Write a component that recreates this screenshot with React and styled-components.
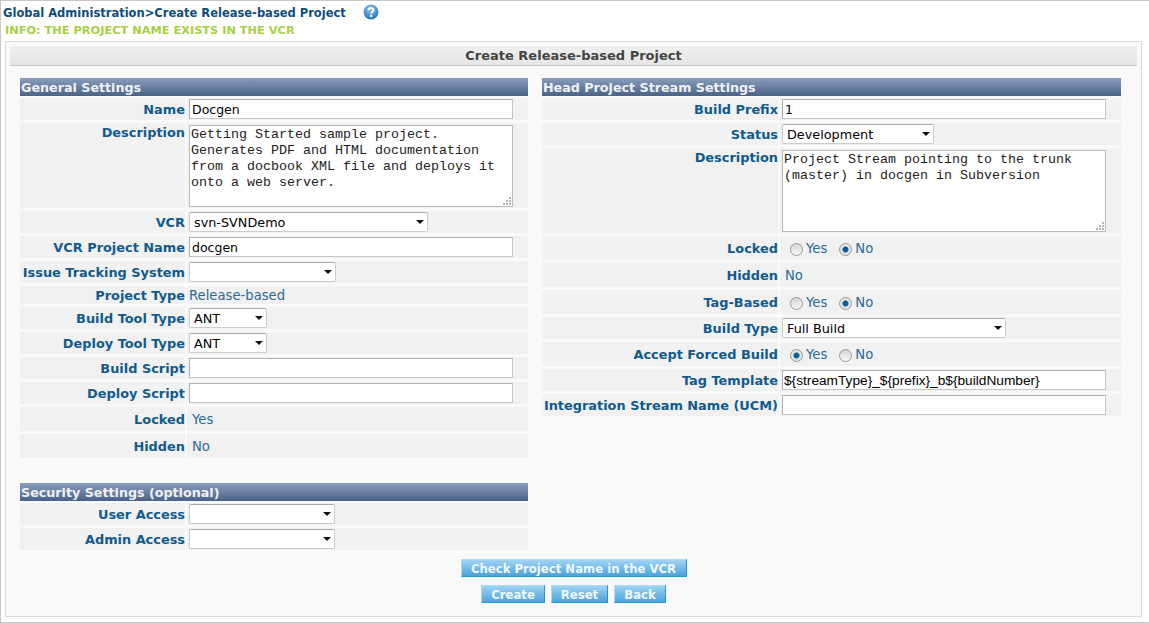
import React from 'react';
import styled, { createGlobalStyle } from 'styled-components';

const Global = createGlobalStyle`
  html, body { margin: 0; padding: 0; background: #fff; }
  body { font-family: 'DejaVu Sans', Verdana, sans-serif; font-size: 12px; color: #105a8d; }
  * { box-sizing: border-box; }
`;

const leftRows = [
  { label: 'Name', h: 22, kind: 'input', value: 'Docgen' },
  { label: 'Description', h: 85, kind: 'area', value: 'Getting Started sample project.\nGenerates PDF and HTML documentation\nfrom a docbook XML file and deploys it\nonto a web server.' },
  { label: 'VCR', h: 22, kind: 'select', value: 'svn-SVNDemo', w: 239 },
  { label: 'VCR Project Name', h: 22, kind: 'input', value: 'docgen' },
  { label: 'Issue Tracking System', h: 22, kind: 'select', value: '', w: 147 },
  { label: 'Project Type', h: 18, kind: 'text', value: 'Release-based' },
  { label: 'Build Tool Type', h: 22, kind: 'select', value: 'ANT', w: 78 },
  { label: 'Deploy Tool Type', h: 22, kind: 'select', value: 'ANT', w: 78 },
  { label: 'Build Script', h: 22, kind: 'input', value: '' },
  { label: 'Deploy Script', h: 22, kind: 'input', value: '' },
  { label: 'Locked', h: 24, kind: 'note', value: 'Yes' },
  { label: 'Hidden', h: 24, kind: 'note', value: 'No' },
];

const securityRows = [
  { label: 'User Access', h: 22, kind: 'select', value: '', w: 146 },
  { label: 'Admin Access', h: 22, kind: 'select', value: '', w: 146 },
];

const rightRows = [
  { label: 'Build Prefix', h: 22, kind: 'input', value: '1' },
  { label: 'Status', h: 22, kind: 'select', value: 'Development', w: 152 },
  { label: 'Description', h: 85, kind: 'area', value: 'Project Stream pointing to the trunk\n(master) in docgen in Subversion' },
  { label: 'Locked', h: 24, kind: 'radio', yes: false },
  { label: 'Hidden', h: 24, kind: 'note', value: 'No' },
  { label: 'Tag-Based', h: 24, kind: 'radio', yes: false },
  { label: 'Build Type', h: 22, kind: 'select', value: 'Full Build', w: 224 },
  { label: 'Accept Forced Build', h: 24, kind: 'radio', yes: true },
  { label: 'Tag Template', h: 22, kind: 'input', narrow: true, value: '${streamType}_${prefix}_b${buildNumber}' },
  { label: 'Integration Stream Name (UCM)', h: 22, kind: 'input', value: '' },
];

const gripDots = [[7, 1], [4, 4], [7, 4], [1, 7], [4, 7], [7, 7]];

const Page = styled.div`
  width: 1149px;
  height: 623px;
  padding: 4px 7px 0 2px;
  border: 1px solid #c8c8c8;
  border-width: 1px 0 1px 1px;
  overflow: hidden;
`;

const Crumbs = styled.div`
  display: flex;
  align-items: center;
  height: 16px;
  font-size: 11.5px;
  font-weight: bold;
  color: #0f4d7c;
`;

const HelpIcon = styled.svg`
  width: 16px;
  height: 16px;
  margin: -2px 0 0 17px;
`;

const Info = styled.div`
  height: 16px;
  margin: 1px 0 0 2px;
  font-size: 11.35px;
  line-height: 16px;
  font-weight: bold;
  color: #a8cf45;
`;

const Panel = styled.div`
  margin: 3px 0 0 2px;
  height: 576px;
  padding: 4px;
  background: #f9f9f9;
  border: 1px solid #dcdcdc;
`;

const Title = styled.div`
  height: 20px;
  background: linear-gradient(#f0f0f0, #e6e6e6);
  border-bottom: 1px solid #c8c8c8;
  text-align: center;
  font-size: 13px;
  line-height: 20px;
  font-weight: bold;
  color: #444;
`;

const Columns = styled.div`
  display: flex;
  padding: 12px 0 0 10px;
`;

const Column = styled.div`
  width: ${p => p.$w}px;
  margin-right: ${p => p.$gap || 0}px;
`;

const SectionHead = styled.div`
  height: 18px;
  margin-top: ${p => p.$top || 0}px;
  padding-left: 1px;
  background: linear-gradient(#8a9dbc, #4a6288);
  font-size: 12.7px;
  line-height: 20px;
  font-weight: bold;
  color: #f0f2f6;
`;

const Rows = styled.div`
  display: flex;
  flex-direction: column;
  gap: 3px;
  margin-top: 2px;
`;

const Row = styled.div`
  display: flex;
  gap: 2px;
  height: ${p => p.$h}px;
`;

const Label = styled.div`
  flex: none;
  width: ${p => p.$w}px;
  padding-top: ${p => (p.$top ? 2 : 1)}px;
  display: flex;
  align-items: ${p => (p.$top ? 'flex-start' : 'center')};
  justify-content: flex-end;
  background: #f1f1f1;
  font-size: 12.9px;
  font-weight: bold;
  color: #105a8d;
  white-space: nowrap;
`;

const Value = styled.div`
  flex: 1;
  display: flex;
  align-items: center;
  padding-left: ${p => (p.$note ? 5 : 2)}px;
  background: #f1f1f1;
  font-size: 13.2px;
  color: #2b6a96;
`;

const TextInput = styled.input`
  width: ${p => p.$w}px;
  height: 20px;
  padding: 0 ${p => (p.$narrow ? 1 : 2)}px;
  border: 1px solid #c6c6c6;
  border-top-color: #b0b0b0;
  border-left-color: #b0b0b0;
  outline: none;
  background: #fff;
  color: #000;
  font-family: ${p => (p.$narrow ? "'Liberation Sans', Arial, sans-serif" : "'DejaVu Sans', Verdana, sans-serif")};
  font-size: ${p => (p.$narrow ? 13.7 : 12.5)}px;
  line-height: 18px;
`;

const AreaWrap = styled.div`
  position: relative;
  width: ${p => p.$w}px;
  height: 82px;
`;

const TextArea = styled.textarea`
  display: block;
  width: 100%;
  height: 100%;
  margin: 0;
  padding: 1px 1px 0;
  border: 1px solid #bbb;
  outline: none;
  resize: none;
  background: #fff;
  color: #222;
  font-family: 'Liberation Mono', monospace;
  font-size: 13.33px;
  line-height: 16px;
`;

const Grip = styled.svg`
  position: absolute;
  right: 2px;
  bottom: 2px;
  width: 9px;
  height: 9px;
`;

const SelectBox = styled.div`
  position: relative;
  width: ${p => p.$w}px;
  height: 20px;
  padding-left: 4px;
  border: 1px solid #ccc;
  border-top-color: #aaa;
  border-radius: 2px;
  background: #fff;
  color: #000;
  font-size: 12.8px;
  line-height: 20px;

  &::after {
    content: '';
    position: absolute;
    right: 3px;
    top: 7px;
    border: 4px solid transparent;
    border-top: 4px solid #111;
    border-bottom: 0;
  }
`;

const RadioGroup = styled.div`
  display: flex;
  align-items: center;
  padding-left: 8px;
  gap: 3px;
`;

const RadioDot = styled.span`
  width: 13px;
  height: 13px;
  margin-top: 3px;
  margin-left: ${p => p.$gap || 0}px;
  border-radius: 50%;
  border: 1px solid #9a9a9a;
  background: ${p => (p.$on
    ? 'radial-gradient(circle, #0d5f96 0 2.5px, #e4e4e4 3.5px)'
    : 'linear-gradient(#d4d4d4, #fafafa)')};
`;

const Buttons = styled.div`
  display: flex;
  justify-content: center;
  gap: 6px;
  margin-top: ${p => p.$top}px;
`;

const Button = styled.button`
  height: 18px;
  padding: 1px 0 0;
  width: ${p => p.$w}px;
  border: 1px solid #a8dcf4;
  border-right-color: #2e8fcd;
  border-bottom-color: #2e8fcd;
  background: linear-gradient(#a0d4f2, #4ba3dc);
  color: #f2f9fd;
  font-family: 'DejaVu Sans', Verdana, sans-serif;
  font-size: 11.7px;
  font-weight: bold;
`;

function Field({ row, labelWidth, inputWidth }) {
  const isArea = row.kind === 'area';
  return (
    <Row $h={row.h}>
      <Label $w={labelWidth} $top={isArea}>{row.label}</Label>
      <Value $note={row.kind === 'note'}>
        {row.kind === 'input' && <TextInput $w={inputWidth} $narrow={row.narrow} defaultValue={row.value} />}
        {isArea && (
          <AreaWrap $w={inputWidth}>
            <TextArea defaultValue={row.value} />
            <Grip viewBox="0 0 9 9">
              {gripDots.map(([x, y]) => (
                <rect key={`${x}-${y}`} x={x} y={y} width="2" height="2" fill="#b4b4b4" />
              ))}
            </Grip>
          </AreaWrap>
        )}
        {row.kind === 'select' && <SelectBox $w={row.w}>{row.value}</SelectBox>}
        {(row.kind === 'text' || row.kind === 'note') && row.value}
        {row.kind === 'radio' && (
          <RadioGroup>
            <RadioDot $on={row.yes} />Yes
            <RadioDot $on={!row.yes} $gap={9} />No
          </RadioGroup>
        )}
      </Value>
    </Row>
  );
}

export default function App() {
  return (
    <Page>
      <Global />
      <Crumbs>
        Global Administration&gt;Create Release-based Project
        <HelpIcon viewBox="0 0 16 16">
          <defs>
            <radialGradient id="help" cx="45%" cy="30%" r="75%">
              <stop offset="0" stopColor="#8fc4ee" />
              <stop offset="1" stopColor="#1c6cb8" />
            </radialGradient>
          </defs>
          <circle cx="8" cy="8" r="7.5" fill="url(#help)" />
          <path d="M5.6 6.2c0-3 4.9-3 4.9-.2 0 1.900-2.300 1.900-2.300 3.700" fill="none" stroke="#fff" strokeWidth="2" />
          <circle cx="8.200" cy="12" r="1.200" fill="#fff" />
        </HelpIcon>
      </Crumbs>
      <Info>INFO: THE PROJECT NAME EXISTS IN THE VCR</Info>
      <Panel>
        <Title>Create Release-based Project</Title>
        <Columns>
          <Column $w={508} $gap={14}>
            <SectionHead>General Settings</SectionHead>
            <Rows>
              {leftRows.map(row => (
                <Field key={row.label} row={row} labelWidth={165} inputWidth={324} />
              ))}
            </Rows>
            <SectionHead $top={25}>Security Settings (optional)</SectionHead>
            <Rows>
              {securityRows.map(row => (
                <Field key={row.label} row={row} labelWidth={165} inputWidth={324} />
              ))}
            </Rows>
          </Column>
          <Column $w={579}>
            <SectionHead>Head Project Stream Settings</SectionHead>
            <Rows>
              {rightRows.map(row => (
                <Field key={row.label} row={row} labelWidth={236} inputWidth={324} />
              ))}
            </Rows>
          </Column>
        </Columns>
        <Buttons $top={9}>
          <Button $w={226}>Check Project Name in the VCR</Button>
        </Buttons>
        <Buttons $top={8}>
          <Button $w={64}>Create</Button>
          <Button $w={57}>Reset</Button>
          <Button $w={52}>Back</Button>
        </Buttons>
      </Panel>
    </Page>
  );
}
